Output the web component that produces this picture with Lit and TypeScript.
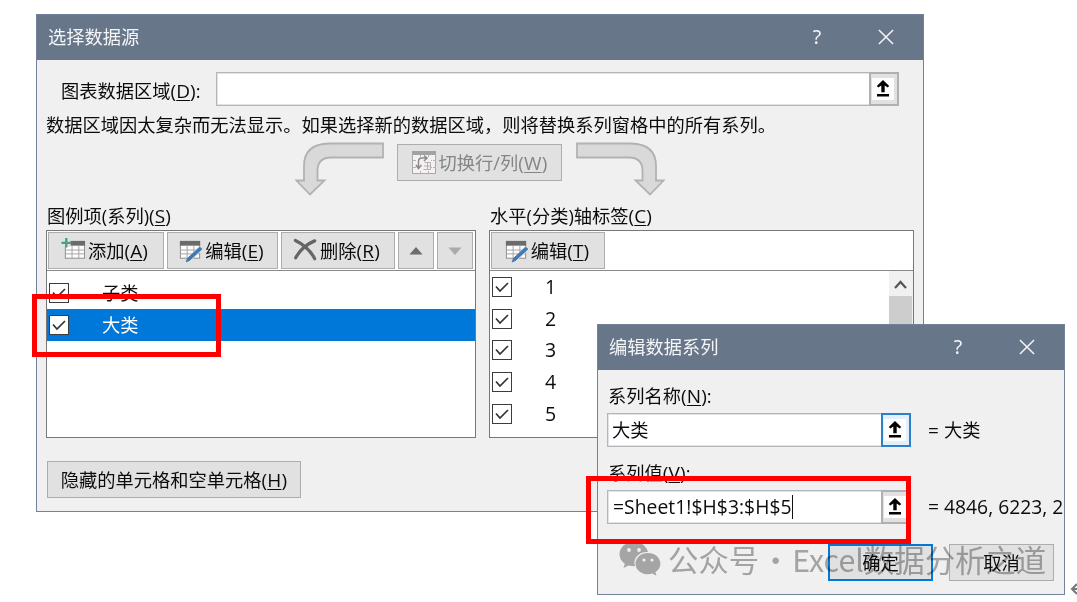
import { LitElement, html, css, svg, nothing } from 'lit';
import { customElement, property } from 'lit/decorators.js';

const textStyles = css`
  :host {
    box-sizing: border-box;
    font-family: 'Open Sans', 'Noto Sans CJK SC', sans-serif;
    font-size: 18.25px;
    line-height: 24px;
    color: #0c0c0c;
    white-space: nowrap;
  }

  * {
    box-sizing: border-box;
  }

  u {
    text-decoration-thickness: 1px;
    text-underline-offset: 2px;
  }

  .latin {
    font-size: 19px;
    letter-spacing: 0.1px;
  }
`;

const key = (letter: string) => html`<span class="latin">(<u>${letter}</u>)</span>`;

const gridLines = svg`
  <rect x="4.5" y="4" width="20" height="17" fill="#fdfdfd" stroke="#8c8c8c" />
  <rect x="4" y="3" width="21" height="5" fill="#6b6b6b" />
  <path d="M4.5 12.5h20M4.5 16.5h20M11.5 8v13M18.5 8v13" fill="none" stroke="#a3a3a3" />
`;

const icons: Record<string, unknown> = {
  add: svg`${gridLines}
    <path d="M0 0h10v9h-10z" fill="#e1e1e1" />
    <path d="M5.5 0v10M0.5 5h10" stroke="#4f9e80" stroke-width="2.4" />`,
  edit: svg`
    <g transform="translate(-2 0)">${gridLines}</g>
    <path d="M22 8.5l4 3.5L13 24l-5 2.500 1.500-5z" fill="#e1e1e1" />
    <path d="M22.500 9.500l2.300 2L12 23.300l-3.400 1.500 1.200-3.500z" fill="#3f78b5" stroke="#3f78b5" />`,
  remove: svg`
    <path d="M2.500 2.500C8 5 18 12 22.500 21.500" fill="none" stroke="#666" stroke-width="3.400" stroke-linecap="round" />
    <path d="M22.500 3C15 6 7 13 2.800 20.500" fill="none" stroke="#666" stroke-width="3.400" stroke-linecap="round" />
    <path d="M25 1.500L15 7.500l4-1z" fill="#666" />`,
  swap: svg`
    <rect x="0.500" y="0.500" width="23" height="22" fill="#f5f0f2" stroke="#aaa" />
    <path d="M0 0h24v4h-24z" fill="#a3a3a3" />
    <path d="M1 9.500h23M1 16.500h23M8.500 4v18M16.500 4v18" stroke="#b9b1b4" stroke-dasharray="3 1" />
    <path d="M4 6h15v13h-15z" fill="#f5f0f2" />
    <path d="M12.500 11.500h6v7h-7M12 15h6.500M15.500 11.500v7" fill="none" stroke="#b5adb0" />
    <path d="M6.500 17V10.500q0-3.500 3.500-3.500h5M12 4.500L15 7l-3 3M4 14l2.500 3.500L9.500 14" fill="none" stroke="#8a8a8a" stroke-width="1.500" />`,
};

@customElement('dialog-window')
export class DialogWindow extends LitElement {
  @property() heading = '';

  static styles = [textStyles, css`
    :host {
      display: flex;
      flex-direction: column;
      background: #f0f0f0;
      border: 1px solid #71829a;
      overflow: hidden;
    }

    .titlebar {
      flex: none;
      display: flex;
      align-items: center;
      height: 45px;
      padding: 0 29px 1px 11px;
      background: #68768a;
      color: #f3f5f7;
    }

    .heading {
      flex: 1;
    }

    .help {
      width: 12px;
      margin-right: 55px;
      text-align: center;
      font-family: 'Noto Sans', sans-serif;
      font-size: 19.5px;
    }

    .close {
      display: block;
      width: 16px;
      height: 16px;
    }
  `];

  render() {
    return html`
      <div class="titlebar">
        <div class="heading">${this.heading}</div>
        <div class="help">?</div>
        <svg class="close" viewBox="0 0 17 17">
          <path d="M1 1l15 15M16 1L1 16" stroke="#f3f5f7" stroke-width="1.600" />
        </svg>
      </div>
      <slot></slot>
    `;
  }
}

@customElement('ref-input')
export class RefInput extends LitElement {
  @property() value = '';
  @property({ type: Boolean }) caret = false;
  @property({ type: Boolean }) active = false;

  static styles = [textStyles, css`
    :host {
      display: flex;
      height: 34px;
      border: 1px solid #b4b6bc;
      box-shadow: inset 0 0 0 1px #e2e3e6;
      background: #fff;
    }

    .value {
      flex: 1;
      display: flex;
      align-items: center;
      padding-left: 4px;
    }

    .formula {
      padding-left: 1px;
      font-size: 19.3px;
      letter-spacing: 0.05px;
    }

    .caret {
      width: 1.5px;
      height: 24px;
      background: #111;
    }

    .picker {
      width: 30px;
      margin: -1px;
      padding: 4px 2px 4px 1px;
      border: 2px solid #b0b0b3;
      background: #e1e1e1;
    }

    .picker--active {
      border-color: #2b80c8;
      background: #e2f0fc;
    }

    .picker svg {
      display: block;
      width: 22px;
      height: 22px;
      background: #fdfdfd;
    }
  `];

  render() {
    return html`
      <div class="value">
        <span class=${this.caret ? 'formula' : ''}>${this.value}</span>
        ${this.caret ? html`<span class="caret"></span>` : nothing}
      </div>
      <div class="picker ${this.active ? 'picker--active' : ''}">
        <svg viewBox="0 0 22 22">
          <path d="M11 2l6.200 6-1.500 1.500-3-2v6.700h-3.400v-6.700l-3 2-1.500-1.500zM5 16h12v2.400h-12z" />
        </svg>
      </div>
    `;
  }
}

@customElement('check-row')
export class CheckRow extends LitElement {
  static styles = [textStyles, css`
    :host {
      display: flex;
      align-items: center;
      height: 31.75px;
      padding-left: 2px;
      gap: 33px;
    }

    :host([selected]) {
      background: #0078d9;
      color: #fff;
    }

    .box {
      width: 20px;
      height: 20px;
      border: 1.5px solid #3c3c3c;
      background: #fff;
    }

    svg {
      display: block;
      width: 17px;
      height: 17px;
    }
  `];

  render() {
    return html`
      <div class="box">
        <svg viewBox="0 0 17 17">
          <path d="M3 8.500l4 4.500 8-8" fill="none" stroke="#333" stroke-width="1.700" />
        </svg>
      </div>
      <slot></slot>
    `;
  }
}

@customElement('app-root')
export class AppRoot extends LitElement {
  static styles = [textStyles, css`
    :host {
      display: block;
      position: relative;
      width: 1077px;
      height: 602px;
      overflow: hidden;
      background: #fff;
    }

    .source {
      position: absolute;
      left: 36px;
      top: 14px;
      width: 888px;
      height: 498px;
    }

    .source__body {
      display: flex;
      flex-direction: column;
      padding: 12px 9px 0 9px;
    }

    .range {
      display: grid;
      grid-template-columns: 155px 683px;
      align-items: center;
      padding-left: 15px;
    }

    .range__label {
      padding-top: 3px;
    }

    .message {
      height: 24px;
      margin-top: 7px;
    }

    .switch {
      display: flex;
      align-items: flex-start;
      height: 54px;
      margin-top: 5px;
      padding-left: 249px;
    }

    .arrow {
      width: 90px;
      height: 54px;
    }

    .arrow--flip {
      transform: scaleX(-1);
      margin-left: -1px;
    }

    .btn {
      display: flex;
      align-items: center;
      justify-content: center;
      height: 37px;
      border: 1.5px solid #adadad;
      background: #e1e1e1;
    }

    .btn--switch {
      width: 165px;
      margin: 2px 14px 0 12px;
      gap: 3px;
      color: #858585;
    }

    .btn--switch svg {
      width: 24px;
      height: 23px;
    }

    .panels {
      display: grid;
      grid-template-columns: 430px 425px;
      column-gap: 13px;
      margin-top: 8px;
    }

    .label {
      height: 26px;
      padding-left: 1px;
    }

    .panel {
      height: 208px;
      border: 1.5px solid #777;
      background: #fff;
    }

    .toolbar {
      display: flex;
      gap: 3px;
      height: 40px;
      padding: 1px;
      border-bottom: 1.5px solid #8a8a8a;
    }

    .tool {
      gap: 2px;
      padding-right: 3px;
    }

    .tool svg {
      width: 25px;
      height: 25px;
    }

    .tool--add {
      width: 116px;
    }

    .tool--edit {
      width: 111px;
    }

    .tool--axis {
      width: 114px;
    }

    .tool--remove {
      width: 114px;
    }

    .tool--move {
      width: 36px;
    }

    .tool--move svg {
      width: 14px;
      height: 8px;
    }

    .series {
      padding-top: 6px;
    }

    .axis {
      display: flex;
      justify-content: space-between;
      height: 165px;
    }

    .axis check-row {
      font-size: 19.5px;
    }

    .scroll {
      display: flex;
      flex-direction: column;
      width: 24px;
      background: #f0f0f0;
    }

    .scroll__up {
      flex: none;
      width: 24px;
      height: 25px;
    }

    .scroll__thumb {
      flex: 1;
      margin-right: 1px;
      background: #cdcdcd;
    }

    .btn--hidden {
      width: 254px;
      margin: 23px 0 0 1px;
    }

    .edit {
      position: absolute;
      left: 597px;
      top: 324px;
      width: 468px;
      height: 271px;
    }

    .edit__body {
      display: flex;
      flex-direction: column;
      padding: 14px 0 0 9px;
    }

    .edit__label {
      height: 29px;
      padding-left: 1px;
    }

    .field {
      display: grid;
      grid-template-columns: 304px 1fr;
      column-gap: 17px;
      align-items: center;
      margin-bottom: 14px;
    }

    .field__result {
      font-size: 19.3px;
      margin-right: 1px;
      overflow: hidden;
    }

    .actions {
      display: flex;
      justify-content: flex-end;
      gap: 16px;
      margin-top: 6px;
      padding-right: 10px;
    }

    .btn--action {
      width: 105px;
    }

    .btn--primary {
      border: 2px solid #0078d7;
    }

    .watermark {
      position: absolute;
      left: 619px;
      top: 539px;
      display: flex;
      align-items: center;
      height: 40px;
      font-family: 'Noto Sans CJK SC', sans-serif;
      font-size: 30.4px;
      line-height: 40px;
      color: #adadad;
      mix-blend-mode: multiply;
    }

    .watermark svg {
      width: 42px;
      height: 36px;
      margin-right: 7px;
    }

    .watermark__dot {
      width: 33px;
      text-align: center;
    }

    .mark {
      position: absolute;
      border: 5px solid #f00;
    }

    .mark--series {
      left: 32px;
      top: 294px;
      width: 189px;
      height: 63px;
    }

    .mark--value {
      left: 586px;
      top: 476px;
      width: 325px;
      height: 68px;
    }

    .return {
      position: absolute;
      left: 1070px;
      top: 581px;
      width: 10px;
      height: 16px;
    }
  `];

  renderTool(icon: string, label: string, letter: string, kind = icon) {
    return html`
      <div class="btn tool tool--${kind}">
        <svg viewBox="0 0 26 26">${icons[icon]}</svg>
        <span>${label}${key(letter)}</span>
      </div>
    `;
  }

  renderArrow(flip = false) {
    return html`
      <svg class="arrow ${flip ? 'arrow--flip' : ''}" viewBox="0 0 90 54">
        <path
          d="M88 1.500H34Q9 2 9 24V38.500H1.500L15 52.500 29.500 38.500H22.500V28Q23 15.500 36 15.500H88Z"
          fill="#d9d9d9" stroke="#b2b2b2" stroke-width="1.800" />
      </svg>
    `;
  }

  renderSource() {
    return html`
      <dialog-window class="source" heading="选择数据源">
        <div class="source__body">
          <div class="range">
            <span class="range__label">图表数据区域${key('D')}:</span>
            <ref-input></ref-input>
          </div>
          <div class="message">数据区域因太复杂而无法显示。如果选择新的数据区域，则将替换系列窗格中的所有系列。</div>
          <div class="switch">
            ${this.renderArrow()}
            <div class="btn btn--switch">
              <svg viewBox="0 0 24 23">${icons.swap}</svg>
              <span>切换行/列${key('W')}</span>
            </div>
            ${this.renderArrow(true)}
          </div>
          <div class="panels">
            <div>
              <div class="label">图例项(系列)${key('S')}</div>
              <div class="panel">
                <div class="toolbar">
                  ${this.renderTool('add', '添加', 'A')}
                  ${this.renderTool('edit', '编辑', 'E')}
                  ${this.renderTool('remove', '删除', 'R')}
                  <div class="btn tool--move">
                    <svg viewBox="0 0 16 9"><path d="M8 0l7.500 8.500h-15z" fill="#6d6d6d" /></svg>
                  </div>
                  <div class="btn tool--move">
                    <svg viewBox="0 0 16 9"><path d="M8 9l7.500-8.500h-15z" fill="#aaa" /></svg>
                  </div>
                </div>
                <div class="series">
                  <check-row>子类</check-row>
                  <check-row selected>大类</check-row>
                </div>
              </div>
            </div>
            <div>
              <div class="label">水平(分类)轴标签${key('C')}</div>
              <div class="panel">
                <div class="toolbar">${this.renderTool('edit', '编辑', 'T', 'axis')}</div>
                <div class="axis">
                  <div>
                    ${[1, 2, 3, 4, 5].map((n) => html`<check-row>${n}</check-row>`)}
                  </div>
                  <div class="scroll">
                    <svg class="scroll__up" viewBox="0 0 24 25">
                      <path d="M6 17l5.500-6 5.500 6" fill="none" stroke="#555" stroke-width="2.200" />
                    </svg>
                    <div class="scroll__thumb"></div>
                  </div>
                </div>
              </div>
            </div>
          </div>
          <div class="btn btn--hidden"><span>隐藏的单元格和空单元格${key('H')}</span></div>
        </div>
      </dialog-window>
    `;
  }

  renderEdit() {
    return html`
      <dialog-window class="edit" heading="编辑数据系列">
        <div class="edit__body">
          <div class="edit__label">系列名称${key('N')}:</div>
          <div class="field">
            <ref-input value="大类" active></ref-input>
            <span><span class="latin">= </span>大类</span>
          </div>
          <div class="edit__label">系列值${key('V')}:</div>
          <div class="field">
            <ref-input value="=Sheet1!$H$3:$H$5" caret></ref-input>
            <span class="field__result">= 4846, 6223, 2</span>
          </div>
          <div class="actions">
            <div class="btn btn--action btn--primary">确定</div>
            <div class="btn btn--action">取消</div>
          </div>
        </div>
      </dialog-window>
    `;
  }

  render() {
    return html`
      ${this.renderSource()}
      ${this.renderEdit()}
      <div class="watermark">
        <svg viewBox="0 0 42 36">
          <path
            d="M15 1C6.500 1 0.500 6.500 0.500 13.200c0 4 2 7.200 5.300 9.500L4.500 27l5-2.600c2 .6 4 .9 6.500.8C13.500 17 20 10.500 29 11 27.500 5 22 1 15 1z"
            fill="#b0b0b0" />
          <path
            d="M29 12c-7 0-12.500 4.700-12.500 10.700S22 33.300 29 33.300c1.600 0 3-.3 4.400-.7l4 2.200-1-3.700c3-2 5-5 5-8.400C41.400 16.700 36 12 29 12z"
            fill="#b0b0b0" />
          <g fill="#fff">
            <circle cx="10" cy="9" r="1.900" />
            <circle cx="20" cy="9" r="1.900" />
            <circle cx="25" cy="19" r="1.600" />
            <circle cx="33" cy="19" r="1.600" />
          </g>
        </svg>
        <span>公众号</span>
        <span class="watermark__dot">·</span>
        <span>Excel数据分析之道</span>
      </div>
      <div class="mark mark--series"></div>
      <div class="mark mark--value"></div>
      <svg class="return" viewBox="0 0 10 16">
        <path d="M10 8H2M7 3L2 8l5 5" fill="none" stroke="#777" stroke-width="2" />
      </svg>
    `;
  }
}
